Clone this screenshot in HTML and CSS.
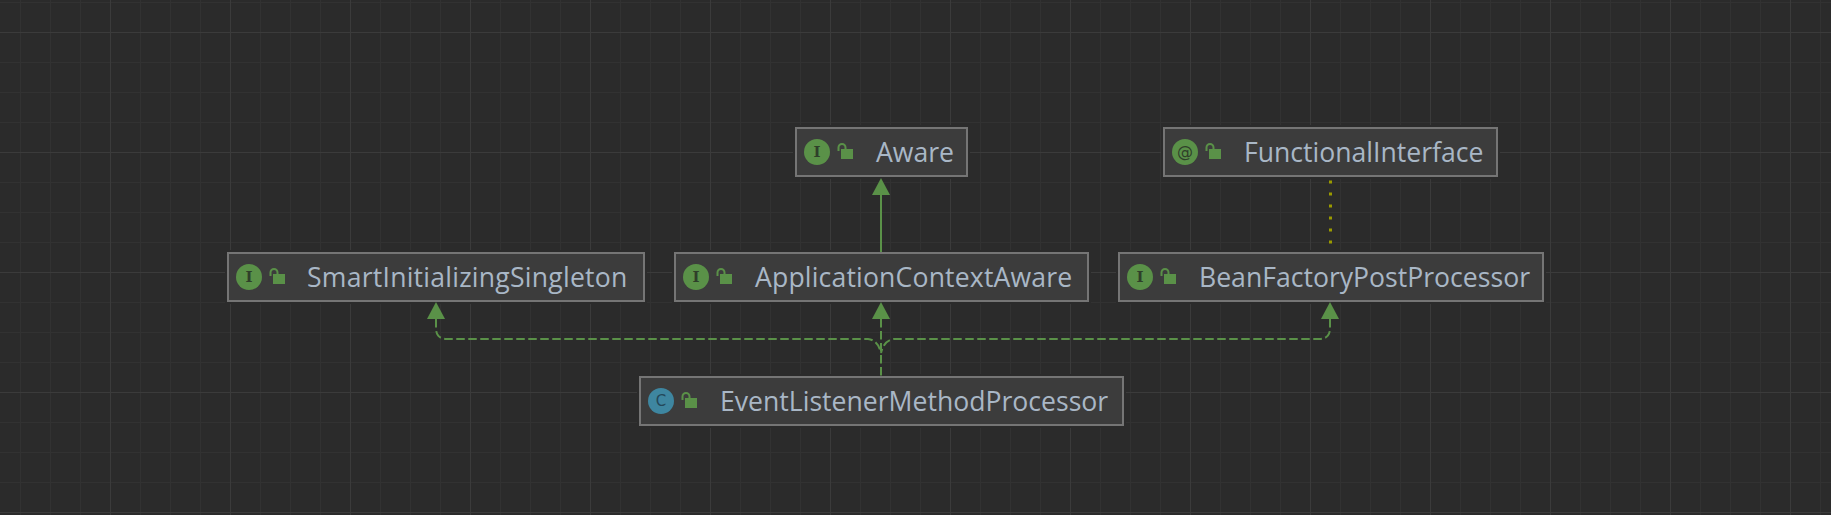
FILE: index.html
```html
<!DOCTYPE html>
<html lang="en">
<head>
<meta charset="utf-8">
<title>EventListenerMethodProcessor diagram</title>
<link rel="stylesheet" href="styles.css">
</head>
<body>
<main class="canvas">
  <article class="node node-aware">
    <span class="badge badge-i">I</span>
    <svg class="lock" width="17" height="18" viewBox="0 0 17 18"><path class="shackle" d="M1.5 8 V4.5 A3.5 3.5 0 0 1 8.5 4.5 V6"/><rect class="body" x="4" y="6" width="12" height="10"/></svg>
    <span class="label">Aware</span>
  </article>

  <article class="node node-functional">
    <span class="badge badge-i badge-at">@</span>
    <svg class="lock" width="17" height="18" viewBox="0 0 17 18"><path class="shackle" d="M1.5 8 V4.5 A3.5 3.5 0 0 1 8.5 4.5 V6"/><rect class="body" x="4" y="6" width="12" height="10"/></svg>
    <span class="label">FunctionalInterface</span>
  </article>

  <article class="node node-smart">
    <span class="badge badge-i">I</span>
    <svg class="lock" width="17" height="18" viewBox="0 0 17 18"><path class="shackle" d="M1.5 8 V4.5 A3.5 3.5 0 0 1 8.5 4.5 V6"/><rect class="body" x="4" y="6" width="12" height="10"/></svg>
    <span class="label label-smart">SmartInitializingSingleton</span>
  </article>

  <article class="node node-context">
    <span class="badge badge-i">I</span>
    <svg class="lock" width="17" height="18" viewBox="0 0 17 18"><path class="shackle" d="M1.5 8 V4.5 A3.5 3.5 0 0 1 8.5 4.5 V6"/><rect class="body" x="4" y="6" width="12" height="10"/></svg>
    <span class="label label-context">ApplicationContextAware</span>
  </article>

  <article class="node node-bean">
    <span class="badge badge-i">I</span>
    <svg class="lock" width="17" height="18" viewBox="0 0 17 18"><path class="shackle" d="M1.5 8 V4.5 A3.5 3.5 0 0 1 8.5 4.5 V6"/><rect class="body" x="4" y="6" width="12" height="10"/></svg>
    <span class="label">BeanFactoryPostProcessor</span>
  </article>

  <article class="node node-event">
    <span class="badge badge-c">C</span>
    <svg class="lock" width="17" height="18" viewBox="0 0 17 18"><path class="shackle" d="M1.5 8 V4.5 A3.5 3.5 0 0 1 8.5 4.5 V6"/><rect class="body" x="4" y="6" width="12" height="10"/></svg>
    <span class="label">EventListenerMethodProcessor</span>
  </article>

  <svg class="edges" width="1831" height="515" viewBox="0 0 1831 515">
    <line class="solid" x1="881" y1="194" x2="881" y2="252"/>
    <path class="arrow" d="M881 178 L890 195 L872 195 Z"/>
    <line class="dotted" x1="1330.5" y1="180.5" x2="1330.5" y2="250"/>
    <path class="dashed" d="M881 319 V376"/>
    <path class="arrow" d="M881 302 L890 319 L872 319 Z"/>
    <path class="dashed" d="M436 319 V328 Q436 339 447 339 H868 Q878 340 881 353"/>
    <path class="arrow" d="M436 302 L445 319 L427 319 Z"/>
    <path class="dashed" d="M1330 319 V328 Q1330 339 1319 339 H894 Q884 340 881 353"/>
    <path class="arrow" d="M1330 302 L1339 319 L1321 319 Z"/>
  </svg>
</main>
</body>
</html>
```
FILE: styles.css
```css
html, body {
  margin: 0;
  padding: 0;
  background: #2b2b2b;
}

.canvas {
  position: relative;
  width: 1831px;
  height: 515px;
  overflow: hidden;
  background-color: #2b2b2b;
  background-image:
    linear-gradient(to right, #3b3b3b 1px, transparent 1px),
    linear-gradient(to bottom, #3b3b3b 1px, transparent 1px),
    linear-gradient(to right, #323232 1px, transparent 1px),
    linear-gradient(to bottom, #323232 1px, transparent 1px);
  background-size: 120px 120px, 120px 120px, 30px 30px, 30px 30px;
  background-position: 110px 0, 0 32px, 20px 0, 0 2px;
}

.edges {
  position: absolute;
  left: 0;
  top: 0;
}

.solid, .dashed {
  fill: none;
  stroke: #5a9148;
  stroke-width: 2;
}

.dashed {
  stroke-dasharray: 8.5 3.5;
}

.dotted {
  stroke: #9a9a00;
  stroke-width: 3;
  stroke-dasharray: 3 9;
}

.arrow {
  fill: #5a9148;
}

.node {
  position: absolute;
  box-sizing: border-box;
  height: 50px;
  top: 252px;
  display: flex;
  align-items: center;
  padding-left: 7px;
  background: #3c3c3c;
  border: 2px solid #757575;
  box-shadow: 0 0 0 2px #2b2b2b;
  font-family: "Open Sans", "Noto Sans", sans-serif;
  font-size: 26.6px;
  color: #a9b7c6;
  white-space: nowrap;
}

.node-aware { left: 795px; top: 127px; width: 173px; }
.node-functional { left: 1163px; top: 127px; width: 335px; }
.node-smart { left: 227px; width: 418px; }
.node-context { left: 674px; width: 415px; }
.node-bean { left: 1118px; width: 426px; }
.node-event { left: 639px; top: 376px; width: 485px; }

.badge {
  flex: none;
  width: 26px;
  height: 26px;
  border-radius: 50%;
  display: flex;
  align-items: center;
  justify-content: center;
  color: #2f3f2a;
  font-size: 15px;
  line-height: 1;
}

.badge-i {
  background: #5a9148;
  font-family: "DejaVu Serif", serif;
  font-weight: 700;
}

.badge-at {
  font-family: "DejaVu Sans", sans-serif;
  font-size: 16px;
  font-weight: 400;
}

.badge-c {
  background: #3e86a0;
  color: #24485a;
  font-family: "DejaVu Sans", sans-serif;
}

.lock {
  flex: none;
  margin-left: 7px;
}

.shackle {
  fill: none;
  stroke: #5a9148;
  stroke-width: 2;
}

.body {
  fill: #5a9148;
}

.label {
  margin-left: 22px;
}

.label-smart {
  margin-left: 21px;
  letter-spacing: 0.23px;
}

.label-context {
  letter-spacing: 0.16px;
}
```
